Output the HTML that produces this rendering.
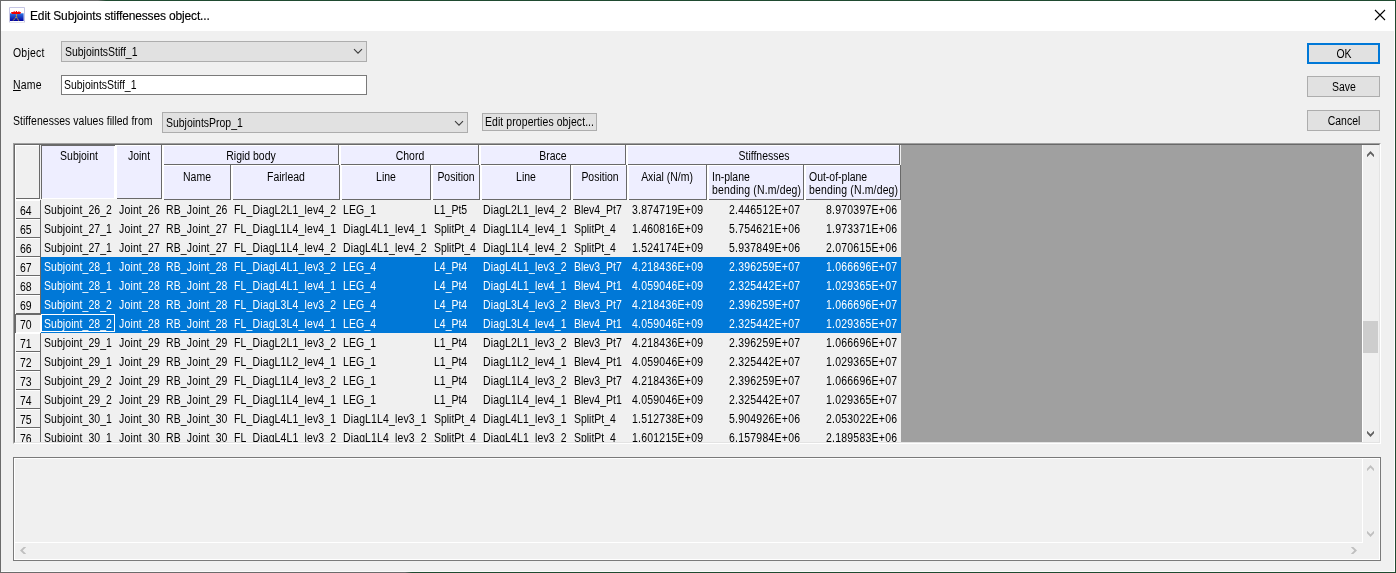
<!DOCTYPE html>
<html lang="en">
<head>
<meta charset="utf-8">
<title>Edit Subjoints stiffenesses object...</title>
<style>
html,body{margin:0;padding:0;background:#f0f0f0;overflow:hidden}
#win{will-change:transform;position:relative;width:1396px;height:573px;background:#f0f0f0;overflow:hidden;font-family:"Liberation Sans",sans-serif;color:#000}
#win div,#win span,#win svg{position:absolute;box-sizing:border-box}
#titlebar{left:0;top:0;width:1396px;height:31px;background:#fff}
#title{left:30px;top:8px;font-size:12px;line-height:16px;white-space:nowrap;letter-spacing:-0.15px;-webkit-text-stroke:.15px #000}
.t{font-size:12.5px;line-height:15px;white-space:nowrap;transform:scaleX(0.837);transform-origin:0 0}
.t.r{transform-origin:100% 0;letter-spacing:.3px}
.t.w{letter-spacing:.18px}
.t.c{transform-origin:50% 0;text-align:center}
.combo{background:#e1e1e1;border:1px solid #adadad}
.btn{background:#e1e1e1;border:1px solid #adadad}
.hc{background:
 linear-gradient(#696969,#696969) right top/1px 100% no-repeat,
 linear-gradient(#696969,#696969) 2px bottom/calc(100% - 2px) 1px no-repeat,
 linear-gradient(#fff,#fff) left top/2px 100% no-repeat,
 linear-gradient(#fff,#fff) left top/100% 1px no-repeat;
 background-color:#eeeeff}
.hc.l1{background:
 linear-gradient(#696969,#696969) right top/1px 100% no-repeat,
 linear-gradient(#696969,#696969) 1px bottom/calc(100% - 1px) 1px no-repeat,
 linear-gradient(#fff,#fff) left top/1px 100% no-repeat,
 linear-gradient(#fff,#fff) left top/100% 1px no-repeat;
 background-color:#eeeeff}
.hp{background:
 linear-gradient(#696969,#696969) left top/1px 100% no-repeat,
 linear-gradient(#696969,#696969) left top/100% 1px no-repeat,
 linear-gradient(#fff,#fff) right top/1px 100% no-repeat,
 linear-gradient(#fff,#fff) left bottom/100% 1px no-repeat;
 background-color:#eeeeff}
.hp.l1{}
</style>
</head>
<body>
<div id="win">

<div id="titlebar"></div>
<svg id="appicon" style="left:9px;top:7px" width="16" height="16" viewBox="0 0 16 16">
<defs><linearGradient id="sea" x1="0" y1="0" x2="0" y2="1"><stop offset="0" stop-color="#2f74e4"/><stop offset="1" stop-color="#0000a0"/></linearGradient></defs>
<rect x="0" y="0" width="16" height="16" fill="#fff"/>
<path d="M0.5 15.5V0.5H15.5V15.5" fill="none" stroke="#c6c6e4"/>
<path d="M0 15.5H16" fill="none" stroke="#e6e6ee"/>
<rect x="1" y="6.3" width="13.6" height="7.7" fill="url(#sea)"/>
<path d="M2.2 5.1h9.6v1.1l-1 .9H3.2l-1-.9z M4.6 4.3h1.2v1H4.6z M6.8 3.9h1.2v1.4H6.8z M9 4.4h1.6v.9H9z" fill="#f20000"/>
<path d="M7.4 7.2v2.8M7.4 9.8L3.8 14M7.4 9.8L9.9 14" stroke="#e6b422" stroke-width="0.85" stroke-dasharray="2 0.5" fill="none"/>
</svg>
<span id="title">Edit Subjoints stiffenesses object...</span>
<svg style="left:1374px;top:9px" width="12" height="12" viewBox="0 0 12 12"><path d="M1 1L11 11M11 1L1 11" stroke="#000" stroke-width="1.1" fill="none"/></svg>
<span class="t" style="top:46.00px;left:13.20px;letter-spacing:.25px;">Object</span>
<div class="combo" style="left:61px;top:41px;width:306px;height:21px"></div>
<span class="t" style="top:45.00px;left:64.60px;">SubjointsStiff_1</span>
<svg style="left:353px;top:48px" width="10" height="7" viewBox="0 0 10 7"><path d="M1 1.2L5 5.2L9 1.2" stroke="#3c3c3c" stroke-width="1.1" fill="none"/></svg>
<span class="t" style="top:78.00px;left:13.00px;letter-spacing:.25px;"><u>N</u>ame</span>
<div style="left:61px;top:75px;width:306px;height:20px;background:#fff;border:1px solid #7a7a7a"></div>
<span class="t" style="top:78.00px;left:63.70px;">SubjointsStiff_1</span>
<span class="t" style="top:114.00px;left:13.20px;letter-spacing:.05px;">Stiffenesses values filled from</span>
<div class="combo" style="left:162px;top:112px;width:306px;height:21px"></div>
<span class="t" style="top:116.00px;left:166.00px;">SubjointsProp_1</span>
<svg style="left:454px;top:120px" width="10" height="7" viewBox="0 0 10 7"><path d="M1 1.2L5 5.2L9 1.2" stroke="#3c3c3c" stroke-width="1.1" fill="none"/></svg>
<div class="btn" style="left:482px;top:113px;width:115px;height:18px"></div>
<span class="t" style="top:115.00px;left:484.80px;letter-spacing:.1px;">Edit properties object...</span>
<div class="btn" style="left:1307px;top:43px;width:73px;height:21px;border:2px solid #0078d7"></div>
<span class="t c" style="top:47.00px;left:1343.50px;width:60px;margin-left:-30px;">OK</span>
<div class="btn" style="left:1307px;top:76px;width:73px;height:21px"></div>
<span class="t c" style="top:80.00px;left:1343.50px;width:60px;margin-left:-30px;">Save</span>
<div class="btn" style="left:1307px;top:110px;width:73px;height:21px"></div>
<span class="t c" style="top:114.00px;left:1343.50px;width:60px;margin-left:-30px;">Cancel</span>
<div id="grid" style="left:13px;top:143px;width:1368px;height:301px;background:#a0a0a0;border-style:solid;border-width:2px;border-color:#a0a0a0 #fff #fff #a0a0a0"></div>
<div style="left:14px;top:144px;width:1366px;height:299px;border-style:solid;border-width:1px;border-color:#696969 #e3e3e3 #e3e3e3 #696969"></div>
<div id="gclip" style="left:15px;top:145px;width:1364px;height:297px;overflow:hidden">
<div style="left:-15px;top:-145px;width:1396px;height:573px">
<div style="left:15px;top:145px;width:886px;height:297px;background:#f0f0f0"></div>
<div style="left:41px;top:257px;width:860px;height:76px;background:#0078d7"></div>
<div class="hc l1" style="left:15px;top:145px;width:25px;height:54px;background-color:#f0f0f0;"></div>
<div class="hp" style="left:41px;top:145px;width:74px;height:54px;"></div>
<div class="hc" style="left:115px;top:145px;width:47px;height:54px;"></div>
<div class="hc" style="left:162px;top:145px;width:177px;height:20px;"></div>
<div class="hc" style="left:339px;top:145px;width:140px;height:20px;"></div>
<div class="hc" style="left:479px;top:145px;width:147px;height:20px;"></div>
<div class="hc" style="left:626px;top:145px;width:274px;height:20px;"></div>
<div class="hc" style="left:162px;top:165px;width:69px;height:35px;"></div>
<div class="hc" style="left:231px;top:165px;width:109px;height:35px;"></div>
<div class="hc" style="left:340px;top:165px;width:91px;height:35px;"></div>
<div class="hc" style="left:431px;top:165px;width:49px;height:35px;"></div>
<div class="hc" style="left:480px;top:165px;width:91px;height:35px;"></div>
<div class="hc" style="left:571px;top:165px;width:56px;height:35px;"></div>
<div class="hc" style="left:627px;top:165px;width:80px;height:35px;"></div>
<div class="hc" style="left:707px;top:165px;width:97px;height:35px;"></div>
<div class="hc" style="left:804px;top:165px;width:97px;height:35px;"></div>
<span class="t c" style="top:149.00px;left:79.30px;width:200px;margin-left:-100px;">Subjoint</span>
<span class="t c" style="top:149.00px;left:138.60px;width:200px;margin-left:-100px;">Joint</span>
<span class="t c" style="top:149.00px;left:251.00px;width:200px;margin-left:-100px;">Rigid body</span>
<span class="t c" style="top:149.00px;left:410.00px;width:200px;margin-left:-100px;">Chord</span>
<span class="t c" style="top:149.00px;left:553.00px;width:200px;margin-left:-100px;">Brace</span>
<span class="t c" style="top:149.00px;left:764.00px;width:200px;margin-left:-100px;">Stiffnesses</span>
<span class="t c" style="top:170.00px;left:196.70px;width:200px;margin-left:-100px;">Name</span>
<span class="t c" style="top:170.00px;left:286.00px;width:200px;margin-left:-100px;">Fairlead</span>
<span class="t c" style="top:170.00px;left:386.00px;width:200px;margin-left:-100px;">Line</span>
<span class="t c" style="top:170.00px;left:456.00px;width:200px;margin-left:-100px;">Position</span>
<span class="t c" style="top:170.00px;left:526.00px;width:200px;margin-left:-100px;">Line</span>
<span class="t c" style="top:170.00px;left:599.50px;width:200px;margin-left:-100px;">Position</span>
<span class="t c" style="top:170.00px;left:667.00px;width:200px;margin-left:-100px;">Axial (N/m)</span>
<span class="t" style="top:170.00px;left:711.50px;">In-plane</span>
<span class="t w" style="top:183.00px;left:711.50px;">bending (N.m/deg)</span>
<span class="t" style="top:170.00px;left:809.00px;">Out-of-plane</span>
<span class="t w" style="top:183.00px;left:809.00px;">bending (N.m/deg)</span>
<div class="hc l1" style="left:15px;top:200px;width:26px;height:19px;background-color:#f0f0f0"></div>
<span class="t" style="top:204.00px;left:20.00px;">64</span>
<span class="t" style="top:203.00px;left:43.80px;letter-spacing:.1px;">Subjoint_26_2</span>
<span class="t" style="top:203.00px;left:119.00px;letter-spacing:.2px;">Joint_26</span>
<span class="t" style="top:203.00px;left:166.40px;letter-spacing:.18px;">RB_Joint_26</span>
<span class="t" style="top:203.00px;left:234.30px;letter-spacing:.18px;">FL_DiagL2L1_lev4_2</span>
<span class="t" style="top:203.00px;left:342.60px;letter-spacing:.18px;">LEG_1</span>
<span class="t" style="top:203.00px;left:433.50px;">L1_Pt5</span>
<span class="t" style="top:203.00px;left:482.50px;letter-spacing:.18px;">DiagL2L1_lev4_2</span>
<span class="t" style="top:203.00px;left:573.60px;">Blev4_Pt7</span>
<span class="t r" style="top:203.00px;right:693.00px;">3.874719E+09</span>
<span class="t r" style="top:203.00px;right:596.00px;">2.446512E+07</span>
<span class="t r" style="top:203.00px;right:499.00px;">8.970397E+06</span>
<div class="hc l1" style="left:15px;top:219px;width:26px;height:19px;background-color:#f0f0f0"></div>
<span class="t" style="top:223.00px;left:20.00px;">65</span>
<span class="t" style="top:222.00px;left:43.80px;letter-spacing:.1px;">Subjoint_27_1</span>
<span class="t" style="top:222.00px;left:119.00px;letter-spacing:.2px;">Joint_27</span>
<span class="t" style="top:222.00px;left:166.40px;letter-spacing:.18px;">RB_Joint_27</span>
<span class="t" style="top:222.00px;left:234.30px;letter-spacing:.18px;">FL_DiagL1L4_lev4_1</span>
<span class="t" style="top:222.00px;left:342.60px;letter-spacing:.18px;">DiagL4L1_lev4_1</span>
<span class="t" style="top:222.00px;left:433.50px;">SplitPt_4</span>
<span class="t" style="top:222.00px;left:482.50px;letter-spacing:.18px;">DiagL1L4_lev4_1</span>
<span class="t" style="top:222.00px;left:573.60px;">SplitPt_4</span>
<span class="t r" style="top:222.00px;right:693.00px;">1.460816E+09</span>
<span class="t r" style="top:222.00px;right:596.00px;">5.754621E+06</span>
<span class="t r" style="top:222.00px;right:499.00px;">1.973371E+06</span>
<div class="hc l1" style="left:15px;top:238px;width:26px;height:19px;background-color:#f0f0f0"></div>
<span class="t" style="top:242.00px;left:20.00px;">66</span>
<span class="t" style="top:241.00px;left:43.80px;letter-spacing:.1px;">Subjoint_27_1</span>
<span class="t" style="top:241.00px;left:119.00px;letter-spacing:.2px;">Joint_27</span>
<span class="t" style="top:241.00px;left:166.40px;letter-spacing:.18px;">RB_Joint_27</span>
<span class="t" style="top:241.00px;left:234.30px;letter-spacing:.18px;">FL_DiagL1L4_lev4_2</span>
<span class="t" style="top:241.00px;left:342.60px;letter-spacing:.18px;">DiagL4L1_lev4_2</span>
<span class="t" style="top:241.00px;left:433.50px;">SplitPt_4</span>
<span class="t" style="top:241.00px;left:482.50px;letter-spacing:.18px;">DiagL1L4_lev4_2</span>
<span class="t" style="top:241.00px;left:573.60px;">SplitPt_4</span>
<span class="t r" style="top:241.00px;right:693.00px;">1.524174E+09</span>
<span class="t r" style="top:241.00px;right:596.00px;">5.937849E+06</span>
<span class="t r" style="top:241.00px;right:499.00px;">2.070615E+06</span>
<div class="hc l1" style="left:15px;top:257px;width:26px;height:19px;background-color:#f0f0f0"></div>
<span class="t" style="top:261.00px;left:20.00px;">67</span>
<span class="t" style="top:260.00px;left:43.80px;color:#fff;letter-spacing:.1px;">Subjoint_28_1</span>
<span class="t" style="top:260.00px;left:119.00px;color:#fff;letter-spacing:.2px;">Joint_28</span>
<span class="t" style="top:260.00px;left:166.40px;color:#fff;letter-spacing:.18px;">RB_Joint_28</span>
<span class="t" style="top:260.00px;left:234.30px;color:#fff;letter-spacing:.18px;">FL_DiagL4L1_lev3_2</span>
<span class="t" style="top:260.00px;left:342.60px;color:#fff;letter-spacing:.18px;">LEG_4</span>
<span class="t" style="top:260.00px;left:433.50px;color:#fff;">L4_Pt4</span>
<span class="t" style="top:260.00px;left:482.50px;color:#fff;letter-spacing:.18px;">DiagL4L1_lev3_2</span>
<span class="t" style="top:260.00px;left:573.60px;color:#fff;">Blev3_Pt7</span>
<span class="t r" style="top:260.00px;right:693.00px;color:#fff;">4.218436E+09</span>
<span class="t r" style="top:260.00px;right:596.00px;color:#fff;">2.396259E+07</span>
<span class="t r" style="top:260.00px;right:499.00px;color:#fff;">1.066696E+07</span>
<div class="hc l1" style="left:15px;top:276px;width:26px;height:19px;background-color:#f0f0f0"></div>
<span class="t" style="top:280.00px;left:20.00px;">68</span>
<span class="t" style="top:279.00px;left:43.80px;color:#fff;letter-spacing:.1px;">Subjoint_28_1</span>
<span class="t" style="top:279.00px;left:119.00px;color:#fff;letter-spacing:.2px;">Joint_28</span>
<span class="t" style="top:279.00px;left:166.40px;color:#fff;letter-spacing:.18px;">RB_Joint_28</span>
<span class="t" style="top:279.00px;left:234.30px;color:#fff;letter-spacing:.18px;">FL_DiagL4L1_lev4_1</span>
<span class="t" style="top:279.00px;left:342.60px;color:#fff;letter-spacing:.18px;">LEG_4</span>
<span class="t" style="top:279.00px;left:433.50px;color:#fff;">L4_Pt4</span>
<span class="t" style="top:279.00px;left:482.50px;color:#fff;letter-spacing:.18px;">DiagL4L1_lev4_1</span>
<span class="t" style="top:279.00px;left:573.60px;color:#fff;">Blev4_Pt1</span>
<span class="t r" style="top:279.00px;right:693.00px;color:#fff;">4.059046E+09</span>
<span class="t r" style="top:279.00px;right:596.00px;color:#fff;">2.325442E+07</span>
<span class="t r" style="top:279.00px;right:499.00px;color:#fff;">1.029365E+07</span>
<div class="hc l1" style="left:15px;top:295px;width:26px;height:19px;background-color:#f0f0f0"></div>
<span class="t" style="top:299.00px;left:20.00px;">69</span>
<span class="t" style="top:298.00px;left:43.80px;color:#fff;letter-spacing:.1px;">Subjoint_28_2</span>
<span class="t" style="top:298.00px;left:119.00px;color:#fff;letter-spacing:.2px;">Joint_28</span>
<span class="t" style="top:298.00px;left:166.40px;color:#fff;letter-spacing:.18px;">RB_Joint_28</span>
<span class="t" style="top:298.00px;left:234.30px;color:#fff;letter-spacing:.18px;">FL_DiagL3L4_lev3_2</span>
<span class="t" style="top:298.00px;left:342.60px;color:#fff;letter-spacing:.18px;">LEG_4</span>
<span class="t" style="top:298.00px;left:433.50px;color:#fff;">L4_Pt4</span>
<span class="t" style="top:298.00px;left:482.50px;color:#fff;letter-spacing:.18px;">DiagL3L4_lev3_2</span>
<span class="t" style="top:298.00px;left:573.60px;color:#fff;">Blev3_Pt7</span>
<span class="t r" style="top:298.00px;right:693.00px;color:#fff;">4.218436E+09</span>
<span class="t r" style="top:298.00px;right:596.00px;color:#fff;">2.396259E+07</span>
<span class="t r" style="top:298.00px;right:499.00px;color:#fff;">1.066696E+07</span>
<div class="hp" style="left:15px;top:314px;width:26px;height:19px;background-color:#f0f0f0"></div>
<span class="t" style="top:318.00px;left:20.00px;">70</span>
<span class="t" style="top:317.00px;left:43.80px;color:#fff;letter-spacing:.1px;">Subjoint_28_2</span>
<span class="t" style="top:317.00px;left:119.00px;color:#fff;letter-spacing:.2px;">Joint_28</span>
<span class="t" style="top:317.00px;left:166.40px;color:#fff;letter-spacing:.18px;">RB_Joint_28</span>
<span class="t" style="top:317.00px;left:234.30px;color:#fff;letter-spacing:.18px;">FL_DiagL3L4_lev4_1</span>
<span class="t" style="top:317.00px;left:342.60px;color:#fff;letter-spacing:.18px;">LEG_4</span>
<span class="t" style="top:317.00px;left:433.50px;color:#fff;">L4_Pt4</span>
<span class="t" style="top:317.00px;left:482.50px;color:#fff;letter-spacing:.18px;">DiagL3L4_lev4_1</span>
<span class="t" style="top:317.00px;left:573.60px;color:#fff;">Blev4_Pt1</span>
<span class="t r" style="top:317.00px;right:693.00px;color:#fff;">4.059046E+09</span>
<span class="t r" style="top:317.00px;right:596.00px;color:#fff;">2.325442E+07</span>
<span class="t r" style="top:317.00px;right:499.00px;color:#fff;">1.029365E+07</span>
<div class="hc l1" style="left:15px;top:333px;width:26px;height:19px;background-color:#f0f0f0"></div>
<span class="t" style="top:337.00px;left:20.00px;">71</span>
<span class="t" style="top:336.00px;left:43.80px;letter-spacing:.1px;">Subjoint_29_1</span>
<span class="t" style="top:336.00px;left:119.00px;letter-spacing:.2px;">Joint_29</span>
<span class="t" style="top:336.00px;left:166.40px;letter-spacing:.18px;">RB_Joint_29</span>
<span class="t" style="top:336.00px;left:234.30px;letter-spacing:.18px;">FL_DiagL2L1_lev3_2</span>
<span class="t" style="top:336.00px;left:342.60px;letter-spacing:.18px;">LEG_1</span>
<span class="t" style="top:336.00px;left:433.50px;">L1_Pt4</span>
<span class="t" style="top:336.00px;left:482.50px;letter-spacing:.18px;">DiagL2L1_lev3_2</span>
<span class="t" style="top:336.00px;left:573.60px;">Blev3_Pt7</span>
<span class="t r" style="top:336.00px;right:693.00px;">4.218436E+09</span>
<span class="t r" style="top:336.00px;right:596.00px;">2.396259E+07</span>
<span class="t r" style="top:336.00px;right:499.00px;">1.066696E+07</span>
<div class="hc l1" style="left:15px;top:352px;width:26px;height:19px;background-color:#f0f0f0"></div>
<span class="t" style="top:356.00px;left:20.00px;">72</span>
<span class="t" style="top:355.00px;left:43.80px;letter-spacing:.1px;">Subjoint_29_1</span>
<span class="t" style="top:355.00px;left:119.00px;letter-spacing:.2px;">Joint_29</span>
<span class="t" style="top:355.00px;left:166.40px;letter-spacing:.18px;">RB_Joint_29</span>
<span class="t" style="top:355.00px;left:234.30px;letter-spacing:.18px;">FL_DiagL1L2_lev4_1</span>
<span class="t" style="top:355.00px;left:342.60px;letter-spacing:.18px;">LEG_1</span>
<span class="t" style="top:355.00px;left:433.50px;">L1_Pt4</span>
<span class="t" style="top:355.00px;left:482.50px;letter-spacing:.18px;">DiagL1L2_lev4_1</span>
<span class="t" style="top:355.00px;left:573.60px;">Blev4_Pt1</span>
<span class="t r" style="top:355.00px;right:693.00px;">4.059046E+09</span>
<span class="t r" style="top:355.00px;right:596.00px;">2.325442E+07</span>
<span class="t r" style="top:355.00px;right:499.00px;">1.029365E+07</span>
<div class="hc l1" style="left:15px;top:371px;width:26px;height:19px;background-color:#f0f0f0"></div>
<span class="t" style="top:375.00px;left:20.00px;">73</span>
<span class="t" style="top:374.00px;left:43.80px;letter-spacing:.1px;">Subjoint_29_2</span>
<span class="t" style="top:374.00px;left:119.00px;letter-spacing:.2px;">Joint_29</span>
<span class="t" style="top:374.00px;left:166.40px;letter-spacing:.18px;">RB_Joint_29</span>
<span class="t" style="top:374.00px;left:234.30px;letter-spacing:.18px;">FL_DiagL1L4_lev3_2</span>
<span class="t" style="top:374.00px;left:342.60px;letter-spacing:.18px;">LEG_1</span>
<span class="t" style="top:374.00px;left:433.50px;">L1_Pt4</span>
<span class="t" style="top:374.00px;left:482.50px;letter-spacing:.18px;">DiagL1L4_lev3_2</span>
<span class="t" style="top:374.00px;left:573.60px;">Blev3_Pt7</span>
<span class="t r" style="top:374.00px;right:693.00px;">4.218436E+09</span>
<span class="t r" style="top:374.00px;right:596.00px;">2.396259E+07</span>
<span class="t r" style="top:374.00px;right:499.00px;">1.066696E+07</span>
<div class="hc l1" style="left:15px;top:390px;width:26px;height:19px;background-color:#f0f0f0"></div>
<span class="t" style="top:394.00px;left:20.00px;">74</span>
<span class="t" style="top:393.00px;left:43.80px;letter-spacing:.1px;">Subjoint_29_2</span>
<span class="t" style="top:393.00px;left:119.00px;letter-spacing:.2px;">Joint_29</span>
<span class="t" style="top:393.00px;left:166.40px;letter-spacing:.18px;">RB_Joint_29</span>
<span class="t" style="top:393.00px;left:234.30px;letter-spacing:.18px;">FL_DiagL1L4_lev4_1</span>
<span class="t" style="top:393.00px;left:342.60px;letter-spacing:.18px;">LEG_1</span>
<span class="t" style="top:393.00px;left:433.50px;">L1_Pt4</span>
<span class="t" style="top:393.00px;left:482.50px;letter-spacing:.18px;">DiagL1L4_lev4_1</span>
<span class="t" style="top:393.00px;left:573.60px;">Blev4_Pt1</span>
<span class="t r" style="top:393.00px;right:693.00px;">4.059046E+09</span>
<span class="t r" style="top:393.00px;right:596.00px;">2.325442E+07</span>
<span class="t r" style="top:393.00px;right:499.00px;">1.029365E+07</span>
<div class="hc l1" style="left:15px;top:409px;width:26px;height:19px;background-color:#f0f0f0"></div>
<span class="t" style="top:413.00px;left:20.00px;">75</span>
<span class="t" style="top:412.00px;left:43.80px;letter-spacing:.1px;">Subjoint_30_1</span>
<span class="t" style="top:412.00px;left:119.00px;letter-spacing:.2px;">Joint_30</span>
<span class="t" style="top:412.00px;left:166.40px;letter-spacing:.18px;">RB_Joint_30</span>
<span class="t" style="top:412.00px;left:234.30px;letter-spacing:.18px;">FL_DiagL4L1_lev3_1</span>
<span class="t" style="top:412.00px;left:342.60px;letter-spacing:.18px;">DiagL1L4_lev3_1</span>
<span class="t" style="top:412.00px;left:433.50px;">SplitPt_4</span>
<span class="t" style="top:412.00px;left:482.50px;letter-spacing:.18px;">DiagL4L1_lev3_1</span>
<span class="t" style="top:412.00px;left:573.60px;">SplitPt_4</span>
<span class="t r" style="top:412.00px;right:693.00px;">1.512738E+09</span>
<span class="t r" style="top:412.00px;right:596.00px;">5.904926E+06</span>
<span class="t r" style="top:412.00px;right:499.00px;">2.053022E+06</span>
<div class="hc l1" style="left:15px;top:428px;width:26px;height:19px;background-color:#f0f0f0"></div>
<span class="t" style="top:432.00px;left:20.00px;">76</span>
<span class="t" style="top:431.00px;left:43.80px;letter-spacing:.1px;">Subjoint_30_1</span>
<span class="t" style="top:431.00px;left:119.00px;letter-spacing:.2px;">Joint_30</span>
<span class="t" style="top:431.00px;left:166.40px;letter-spacing:.18px;">RB_Joint_30</span>
<span class="t" style="top:431.00px;left:234.30px;letter-spacing:.18px;">FL_DiagL4L1_lev3_2</span>
<span class="t" style="top:431.00px;left:342.60px;letter-spacing:.18px;">DiagL1L4_lev3_2</span>
<span class="t" style="top:431.00px;left:433.50px;">SplitPt_4</span>
<span class="t" style="top:431.00px;left:482.50px;letter-spacing:.18px;">DiagL4L1_lev3_2</span>
<span class="t" style="top:431.00px;left:573.60px;">SplitPt_4</span>
<span class="t r" style="top:431.00px;right:693.00px;">1.601215E+09</span>
<span class="t r" style="top:431.00px;right:596.00px;">6.157984E+06</span>
<span class="t r" style="top:431.00px;right:499.00px;">2.189583E+06</span>
<div style="left:15px;top:199px;width:25px;height:1px;background:#fff"></div>
<div style="left:41px;top:314px;width:74px;height:18px;border:1px solid #fff"></div>
</div></div>
<div style="left:1362px;top:145px;width:17px;height:297px;background:#f0f0f0;border-left:1px solid #fff"></div>
<div style="left:1363px;top:321px;width:15px;height:32px;background:#cdcdcd"></div>
<svg style="left:1367px;top:151px" width="7" height="6" viewBox="0 0 7 6"><polygon points="0,3.7 3.5,0 7,3.7 7,6.2 3.5,2.7 0,6.2" fill="#606060"/></svg>
<svg style="left:1367px;top:431px" width="7" height="6" viewBox="0 0 7 6"><polygon points="0,2.3 3.5,6 7,2.3 7,-0.2 3.5,3.3 0,-0.2" fill="#606060"/></svg>
<div style="left:13px;top:457px;width:1368px;height:104px;background:#f0f0f0;border:1px solid #7a7a7a"></div>
<div style="left:14px;top:458px;width:1366px;height:102px;border:1px solid #fff"></div>
<div style="left:15px;top:542px;width:1348px;height:1px;background:#fff"></div>
<div style="left:1362px;top:459px;width:1px;height:84px;background:#fff"></div>
<svg style="left:1367px;top:465px" width="7" height="6" viewBox="0 0 7 6"><polygon points="0,3.7 3.5,0 7,3.7 7,6.2 3.5,2.7 0,6.2" fill="#bfbfbf"/></svg>
<svg style="left:1367px;top:531px" width="7" height="6" viewBox="0 0 7 6"><polygon points="0,2.3 3.5,6 7,2.3 7,-0.2 3.5,3.3 0,-0.2" fill="#bfbfbf"/></svg>
<svg style="left:20px;top:547px" width="6" height="7" viewBox="0 0 6 7"><polygon points="3.7,0 0,3.5 3.7,7 6.2,7 2.7,3.5 6.2,0" fill="#bfbfbf"/></svg>
<svg style="left:1351px;top:547px" width="6" height="7" viewBox="0 0 6 7"><polygon points="2.3,0 6,3.5 2.3,7 -0.2,7 3.3,3.5 -0.2,0" fill="#bfbfbf"/></svg>
<div style="left:1394px;top:31px;width:1px;height:541px;background:#fff"></div>
<div style="left:0;top:571px;width:1395px;height:1px;background:#fafafa"></div>
<div style="left:0;top:0;width:1396px;height:1px;background:linear-gradient(90deg,#6b6b6b 0,#6b6b6b 98px,#1f4a30 106px,#1f4a30 100%)"></div>
<div style="left:0;top:0;width:1px;height:573px;background:#6b6b6b"></div>
<div style="left:1395px;top:0;width:1px;height:573px;background:#1f4a30"></div>
<div style="left:0;top:572px;width:1396px;height:1px;background:linear-gradient(90deg,#6b6b6b 0,#6b6b6b 405px,#1f4a30 412px,#1f4a30 100%)"></div>
</div>
</body>
</html>
